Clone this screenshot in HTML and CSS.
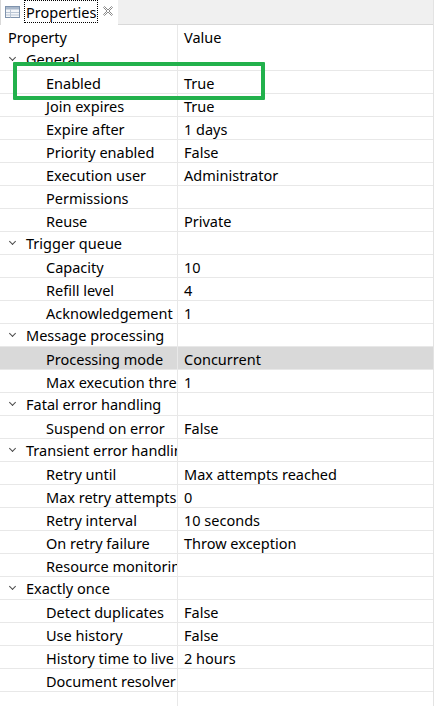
FILE: index.html
```html
<!DOCTYPE html>
<html>
<head>
<meta charset="utf-8">
<link rel="stylesheet" href="styles.css">
</head>
<body>
<div class="view">
  <div class="tabbar">
    <div class="tab">
      <svg class="tab-icon" width="15" height="12" viewBox="0 0 15 12">
        <rect x="0.5" y="0.5" width="14" height="11" fill="#f4f6f9" stroke="#7f93ad"/>
        <rect x="1" y="1" width="13" height="2.5" fill="#a9b8cb"/>
        <path d="M1 6.5H14M1 9H14M5.5 3.5V11.5" stroke="#b9c5d4" stroke-width="1"/>
      </svg>
      <span class="tab-label">Properties</span>
      <svg class="tab-close" width="10" height="10" viewBox="0 0 10 10">
        <path d="M0.5 1.5L1.5 0.5L5 4L8.5 0.5L9.5 1.5L6 5L9.5 8.5L8.5 9.5L5 6L1.5 9.5L0.5 8.5L4 5Z" fill="none" stroke="#8a8a8a" stroke-width="1"/>
      </svg>
    </div>
  </div>
  <div class="tree">
    <div class="header"><div class="c1">Property</div><div class="c2">Value</div></div>

    <div class="row"><div class="c1 group"><span class="chev"></span>General</div><div class="c2"></div></div>
    <div class="row"><div class="c1 child">Enabled</div><div class="c2">True</div></div>
    <div class="row"><div class="c1 child">Join expires</div><div class="c2">True</div></div>
    <div class="row"><div class="c1 child">Expire after</div><div class="c2">1 days</div></div>
    <div class="row"><div class="c1 child">Priority enabled</div><div class="c2">False</div></div>
    <div class="row"><div class="c1 child">Execution user</div><div class="c2">Administrator</div></div>
    <div class="row"><div class="c1 child">Permissions</div><div class="c2"></div></div>
    <div class="row"><div class="c1 child">Reuse</div><div class="c2">Private</div></div>

    <div class="row"><div class="c1 group"><span class="chev"></span>Trigger queue</div><div class="c2"></div></div>
    <div class="row"><div class="c1 child">Capacity</div><div class="c2">10</div></div>
    <div class="row"><div class="c1 child">Refill level</div><div class="c2">4</div></div>
    <div class="row"><div class="c1 child">Acknowledgement</div><div class="c2">1</div></div>

    <div class="row"><div class="c1 group"><span class="chev"></span>Message processing</div><div class="c2"></div></div>
    <div class="row selected"><div class="c1 child">Processing mode</div><div class="c2">Concurrent</div></div>
    <div class="row"><div class="c1 child">Max execution threads</div><div class="c2">1</div></div>

    <div class="row"><div class="c1 group"><span class="chev"></span>Fatal error handling</div><div class="c2"></div></div>
    <div class="row"><div class="c1 child">Suspend on error</div><div class="c2">False</div></div>

    <div class="row"><div class="c1 group"><span class="chev"></span>Transient error handling</div><div class="c2"></div></div>
    <div class="row"><div class="c1 child">Retry until</div><div class="c2">Max attempts reached</div></div>
    <div class="row"><div class="c1 child">Max retry attempts</div><div class="c2">0</div></div>
    <div class="row"><div class="c1 child">Retry interval</div><div class="c2">10 seconds</div></div>
    <div class="row"><div class="c1 child">On retry failure</div><div class="c2">Throw exception</div></div>
    <div class="row"><div class="c1 child">Resource monitoring</div><div class="c2"></div></div>

    <div class="row"><div class="c1 group"><span class="chev"></span>Exactly once</div><div class="c2"></div></div>
    <div class="row"><div class="c1 child">Detect duplicates</div><div class="c2">False</div></div>
    <div class="row"><div class="c1 child">Use history</div><div class="c2">False</div></div>
    <div class="row"><div class="c1 child">History time to live</div><div class="c2">2 hours</div></div>
    <div class="row"><div class="c1 child">Document resolver</div><div class="c2"></div></div>

    <div class="filler"><div class="c1"></div><div class="c2"></div></div>
  </div>
  <div class="highlight-box"></div>
</div>
</body>
</html>
```
FILE: styles.css
```css
html, body {
  margin: 0;
  padding: 0;
  background: #ffffff;
}
body {
  width: 434px;
  height: 706px;
  overflow: hidden;
  font-family: "Noto Sans", "Noto Sans CJK KR", sans-serif;
  font-size: 14.5px;
  color: #000;
}
.view {
  position: relative;
  display: flex;
  flex-direction: column;
  height: 706px;
  border-right: 1px solid #e3e3e3;
  box-sizing: border-box;
}
.tabbar {
  height: 24px;
  background: #f0f0f0;
  border-bottom: 1px solid #d9d9d9;
  display: flex;
  flex: none;
}
.tab {
  width: 118px;
  height: 25px;
  background: #fff;
  border-left: 1px solid #d9d9d9;
  box-sizing: border-box;
  display: flex;
  align-items: center;
  padding-left: 4px;
  position: relative;
  z-index: 1;
}
.tab-icon {
  flex: none;
  margin-top: -2px;
}
.tab-label {
  margin-left: 4px;
  padding: 0 1px;
  height: 23px;
  line-height: 22px;
  border: 1px dotted #000;
  box-sizing: border-box;
  margin-top: -2px;
  font-size: 14.5px;
}
.tab-close {
  margin-left: 5px;
  margin-top: -4px;
  flex: none;
}
.tree {
  flex: 1;
  display: flex;
  flex-direction: column;
}
.header, .row {
  display: flex;
  flex: none;
}
.header {
  height: 23px;
}
.header .c1, .header .c2 {
  height: 23px;
  line-height: 25px;
}
.row {
  height: 22px;
  border-bottom: 1px solid #e8e8e8;
}
.row .c1, .row .c2 {
  height: 22px;
  line-height: 24px;
}
.row.selected {
  background: #d9d9d9;
}
.c1 {
  width: 178px;
  flex: none;
  box-sizing: border-box;
  border-right: 1px solid #e8e8e8;
  white-space: nowrap;
  overflow: hidden;
  padding-left: 8px;
}
.c2 {
  flex: 1;
  padding-left: 6px;
  white-space: nowrap;
  overflow: hidden;
}
.c1.group {
  padding-left: 9px;
  display: flex;
  align-items: center;
}
.c1.child {
  padding-left: 46px;
}
.chev {
  width: 7px;
  height: 4px;
  margin-right: 10px;
  position: relative;
  flex: none;
}
.chev::before {
  content: "";
  position: absolute;
  left: 1px;
  top: -2px;
  width: 4px;
  height: 4px;
  border-right: 1.5px solid #4a4a4a;
  border-bottom: 1.5px solid #4a4a4a;
  transform: rotate(45deg);
}
.filler {
  flex: 1;
  display: flex;
}
.highlight-box {
  position: absolute;
  left: 13px;
  top: 62px;
  width: 252px;
  height: 38px;
  box-sizing: border-box;
  border: 4px solid #22b14c;
  border-radius: 1px;
}
```
